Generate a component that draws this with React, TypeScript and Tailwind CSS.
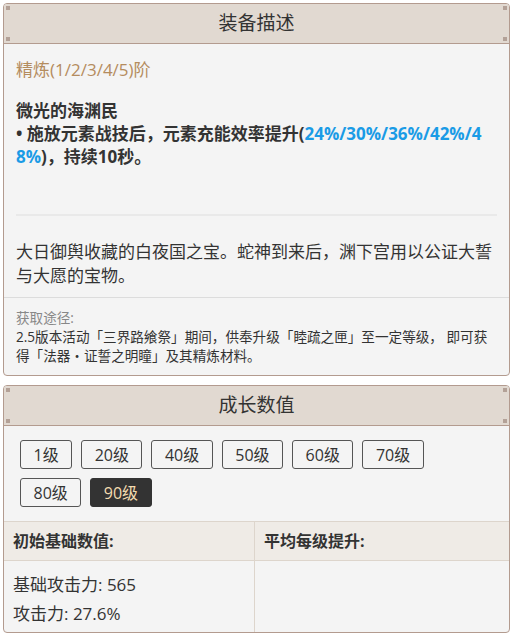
import type { ReactNode } from "react";

const FONT = {
  fontFamily: '"Open Sans", "Noto Sans CJK SC", "Noto Sans", sans-serif',
};

const LEVELS = ["1级", "20级", "40级", "50级", "60级", "70级", "80级", "90级"];

function Dot({ pos }: { pos: string }) {
  return <span className={`absolute w-[4px] h-[4px] bg-[#b3a197] ${pos}`} />;
}

function Panel({ title, children }: { title: string; children: ReactNode }) {
  return (
    <div className="rounded-[4px] border border-[#b39b8f] bg-[#f4f4f4] overflow-hidden">
      <div className="relative h-[40px] bg-[#e1d9d1] border-b border-[#b39b8f] flex items-center justify-center text-[19px] text-[#333]">
        <Dot pos="left-[2px] top-[2px]" />
        <Dot pos="right-[2px] top-[2px]" />
        <Dot pos="left-[2px] bottom-[2px]" />
        <Dot pos="right-[2px] bottom-[2px]" />
        {title}
      </div>
      {children}
    </div>
  );
}

export default function App() {
  return (
    <div style={FONT} className="bg-white w-[513px] min-h-[637px] px-[3px] pt-[3px] flex flex-col gap-[9px] text-[#333]">
      <Panel title="装备描述">
        <div className="px-[12px] pt-[14px]">
          <p className="text-[17px] leading-[24px] text-[#b48c5e]">精炼(1/2/3/4/5)阶</p>
          <div className="mt-[17px] text-[17px] leading-[23px] font-bold break-all">
            <p>微光的海渊民</p>
            <p>
              • 施放元素战技后，元素充能效率提升(
              <span className="text-[#1a9be6]">24%/30%/36%/42%/48%</span>
              )，持续10秒。
            </p>
          </div>
          <div className="mt-[46px] h-[2px] bg-[#e9e9e9]" />
          <p className="mt-[24px] mb-[9px] text-[17px] leading-[24px]">
            大日御舆收藏的白夜国之宝。蛇神到来后，渊下宫用以公证大誓与大愿的宝物。
          </p>
        </div>
        <div className="border-t border-[#dcdcdc] pl-[12px] pr-[18px] pt-[10px] pb-[10px] text-[13.6px] leading-[19px]">
          <p className="text-[#888]">获取途径:</p>
          <p>
            2.5版本活动「三界路飨祭」期间，供奉升级「睦疏之匣」至一定等级， 即可获得「法器・证誓之明瞳」及其精炼材料。
          </p>
        </div>
      </Panel>

      <Panel title="成长数值">
        <div className="px-[16px] pt-[14px] pb-[14px] flex flex-wrap gap-x-[9px] gap-y-[9px]">
          {LEVELS.map((lv) => (
            <button
              key={lv}
              className={`h-[29px] px-[12.5px] rounded-[3px] border text-[16px] leading-none ${
                lv === "90级"
                  ? "bg-[#333] border-[#333] text-[#f3dcb0]"
                  : "bg-transparent border-[#555] text-[#333]"
              }`}
            >
              {lv}
            </button>
          ))}
        </div>
        <div className="grid grid-cols-[251px_1fr] border-t border-[#ddd5cc]">
          <div className="h-[39px] bg-[#efebe6] border-b border-r border-[#ddd5cc] px-[9px] flex items-center text-[16px] font-bold">
            初始基础数值:
          </div>
          <div className="h-[39px] bg-[#efebe6] border-b border-[#ddd5cc] px-[9px] flex items-center text-[16px] font-bold">
            平均每级提升:
          </div>
          <div className="border-r border-[#ddd5cc] px-[9px] pt-[9px] pb-[4px] text-[17px] leading-[29px]">
            <p>基础攻击力: 565</p>
            <p>攻击力: 27.6%</p>
          </div>
          <div />
        </div>
      </Panel>
    </div>
  );
}
